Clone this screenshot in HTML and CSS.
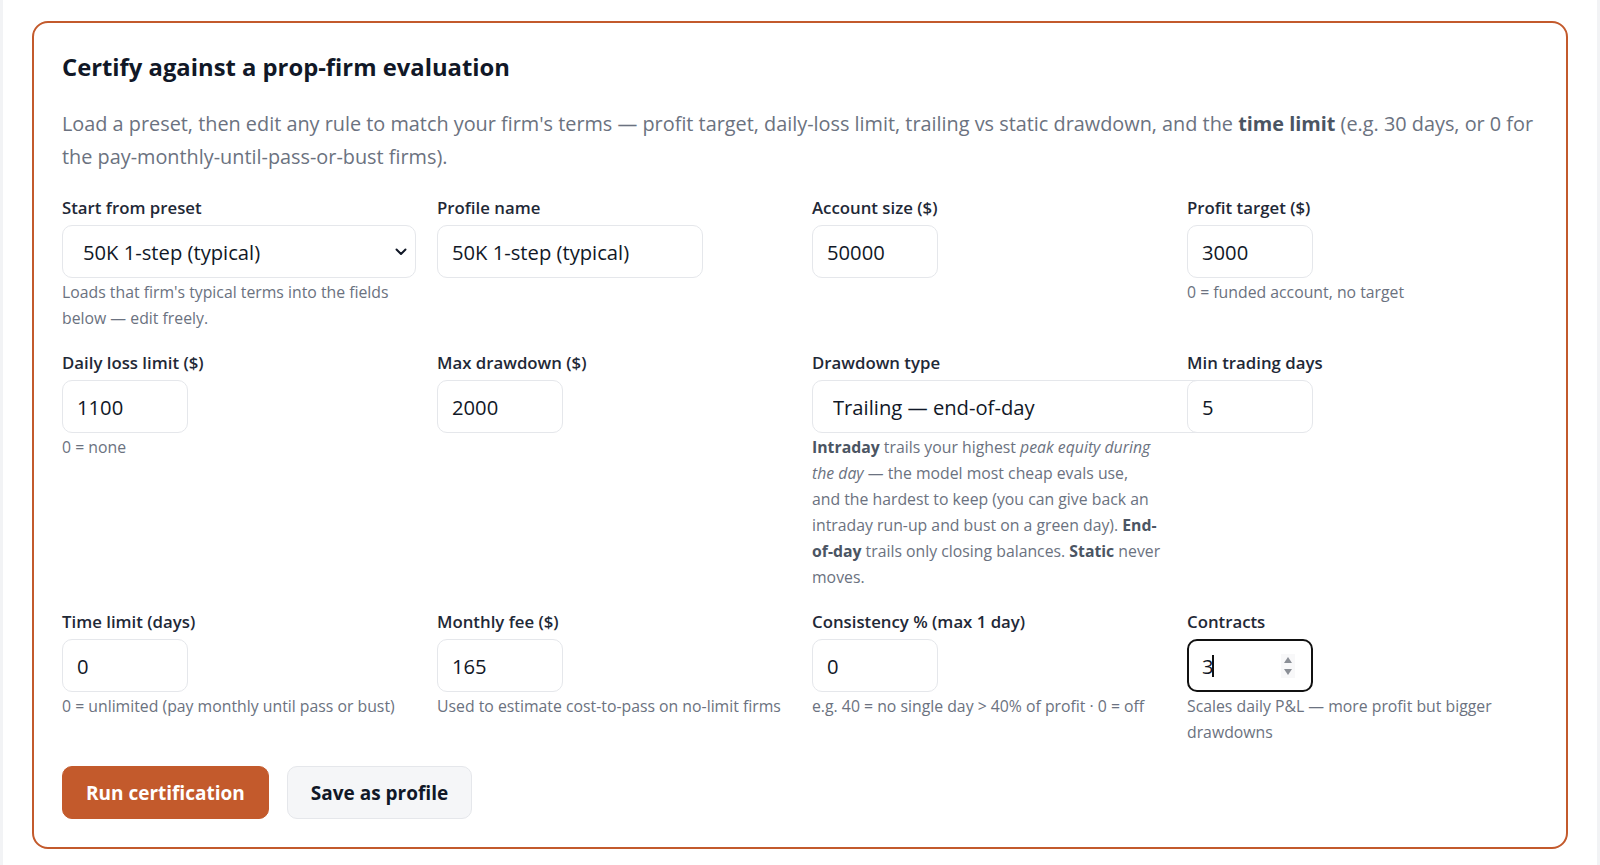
FILE: index.html
```html
<!DOCTYPE html>
<html lang="en">
<head>
  <meta charset="UTF-8">
  <title>Prop-firm certification</title>
  <link rel="stylesheet" href="styles.css">
</head>
<body>
  <div class="page">
    <section class="card">
      <h2 class="card-title">Certify against a prop-firm evaluation</h2>
      <p class="card-lead">Load a preset, then edit any rule to match your firm's terms — profit target, daily-loss limit, trailing vs static drawdown, and the <strong>time limit</strong> (e.g. 30 days, or 0 for the pay-monthly-until-pass-or-bust firms).</p>

      <div class="fields">
        <div class="field">
          <label for="preset">Start from preset</label>
          <select id="preset" class="select select-preset">
            <option>50K 1-step (typical)</option>
            <option>100K 2-step (typical)</option>
            <option>150K 1-step (typical)</option>
          </select>
          <p class="hint">Loads that firm's typical terms into the fields below — edit freely.</p>
        </div>
        <div class="field">
          <label for="pname">Profile name</label>
          <input id="pname" class="input input-text" type="text" value="50K 1-step (typical)">
        </div>
        <div class="field">
          <label for="acct">Account size ($)</label>
          <input id="acct" class="input input-num" type="number" value="50000">
        </div>
        <div class="field">
          <label for="target">Profit target ($)</label>
          <input id="target" class="input input-num" type="number" value="3000">
          <p class="hint">0 = funded account, no target</p>
        </div>

        <div class="field">
          <label for="daily">Daily loss limit ($)</label>
          <input id="daily" class="input input-num" type="number" value="1100">
          <p class="hint">0 = none</p>
        </div>
        <div class="field">
          <label for="maxdd">Max drawdown ($)</label>
          <input id="maxdd" class="input input-num" type="number" value="2000">
        </div>
        <div class="field">
          <label for="ddtype">Drawdown type</label>
          <select id="ddtype" class="select select-dd">
            <option>Trailing — intraday (peak equity)</option>
            <option selected>Trailing — end-of-day</option>
            <option>Static</option>
          </select>
          <p class="hint"><b>Intraday</b> trails your highest <em>peak equity during the day</em> — the model most cheap evals use,<br>and the hardest to keep (you can give back an intraday run-up and bust on a green day). <b>End-of-day</b> trails only closing balances. <b>Static</b> never moves.</p>
        </div>
        <div class="field">
          <label for="mindays">Min trading days</label>
          <input id="mindays" class="input input-num" type="number" value="5">
        </div>

        <div class="field">
          <label for="tlimit">Time limit (days)</label>
          <input id="tlimit" class="input input-num" type="number" value="0">
          <p class="hint">0 = unlimited (pay monthly until pass or bust)</p>
        </div>
        <div class="field">
          <label for="fee">Monthly fee ($)</label>
          <input id="fee" class="input input-num" type="number" value="165">
          <p class="hint">Used to estimate cost-to-pass on no-limit firms</p>
        </div>
        <div class="field">
          <label for="consist">Consistency % (max 1 day)</label>
          <input id="consist" class="input input-num" type="number" value="0">
          <p class="hint">e.g. 40 = no single day &gt; 40% of profit · 0 = off</p>
        </div>
        <div class="field">
          <label for="contracts">Contracts</label>
          <div class="input-wrap">
            <input id="contracts" class="input input-num is-active" type="number" value="3">
            <span class="caret"></span>
            <span class="spinner">
              <svg width="10" height="20" viewBox="0 0 10 20">
                <path d="M5 1 9 7H1z" fill="#8b8f96"/>
                <path d="M1 13h8l-4 6z" fill="#8b8f96"/>
              </svg>
            </span>
          </div>
          <p class="hint">Scales daily P&amp;L — more profit but bigger drawdowns</p>
        </div>
      </div>

      <div class="actions">
        <button class="btn btn-primary" type="button">Run certification</button>
        <button class="btn btn-secondary" type="button">Save as profile</button>
      </div>
    </section>
  </div>
</body>
</html>
```

FILE: styles.css
```css
* {
  box-sizing: border-box;
}

body {
  margin: 0;
  background-color: #f2f3f5;
  font-family: 'Open Sans', 'Noto Sans', sans-serif;
  color: #111827;
}

.page {
  background-color: #fff;
  margin: 0 3px;
  min-height: 865px;
  padding: 21px 29px 18px;
}

.card {
  border: 2px solid #c35a2c;
  border-radius: 16px;
  padding: 28px 28px 28px;
}

.card-title {
  margin: 0;
  font-size: 23.8px;
  line-height: 32px;
  font-weight: 700;
  color: #111827;
}

.card-lead {
  margin: 24px 0 23px;
  font-size: 19.85px;
  line-height: 33px;
  color: #6b7280;
}

.card-lead strong {
  color: #4b5563;
}

.fields {
  display: grid;
  grid-template-columns: repeat(4, minmax(0, 1fr));
  column-gap: 24px;
  row-gap: 20px;
}

.field label {
  display: block;
  font-size: 16.8px;
  line-height: 24px;
  font-weight: 600;
  color: #1f2937;
  margin-bottom: 5px;
}

.input,
.select {
  display: block;
  height: 53px;
  border: 1px solid #e5e7eb;
  border-radius: 10px;
  background-color: #fff;
  font-family: inherit;
  font-size: 20.2px;
  color: #111827;
  padding: 0 14px;
}

.input-num {
  width: 126px;
}

.input-text {
  width: 266px;
}

.select {
  appearance: none;
  padding: 0 20px;
  background-image: url("data:image/svg+xml;utf8,<svg xmlns='http://www.w3.org/2000/svg' width='12' height='8' viewBox='0 0 12 8'><path d='M1.5 1.5 6 6l4.5-4.5' fill='none' stroke='%23111827' stroke-width='2' stroke-linecap='round' stroke-linejoin='round'/></svg>");
  background-repeat: no-repeat;
  background-position: right 8px center;
  background-size: 12px 8px;
}

.select-preset {
  width: 354px;
}

.select-dd {
  width: 410px;
}

.input:focus,
.select:focus {
  outline: none;
}

.input-num::-webkit-inner-spin-button,
.input-num::-webkit-outer-spin-button {
  -webkit-appearance: none;
  margin: 0;
}

.input.is-active {
  border: 2px solid #111;
  padding: 0 13px;
}

.input-wrap {
  position: relative;
  width: 126px;
}

.caret {
  position: absolute;
  left: 25px;
  top: 16px;
  width: 2px;
  height: 22px;
  background-color: #111;
}

.spinner {
  position: absolute;
  left: 94px;
  top: 15px;
  width: 14px;
  height: 24px;
  display: flex;
  align-items: center;
  justify-content: center;
  background-color: #f8f8f9;
}

.hint {
  margin: 1px 0 0;
  font-size: 15.8px;
  line-height: 26px;
  color: #6b7280;
}

.hint b {
  color: #4b5563;
}

.actions {
  display: flex;
  gap: 18px;
  margin-top: 21px;
}

.btn {
  height: 53px;
  padding: 0 23px;
  border-radius: 10px;
  font-family: inherit;
  font-size: 19px;
  font-weight: 700;
  cursor: pointer;
}

.btn-primary {
  background-color: #c35a2c;
  border: 1px solid #c35a2c;
  color: #fff;
}

.btn-secondary {
  background-color: #f5f6f8;
  border: 1px solid #e5e7eb;
  color: #111827;
}
```
